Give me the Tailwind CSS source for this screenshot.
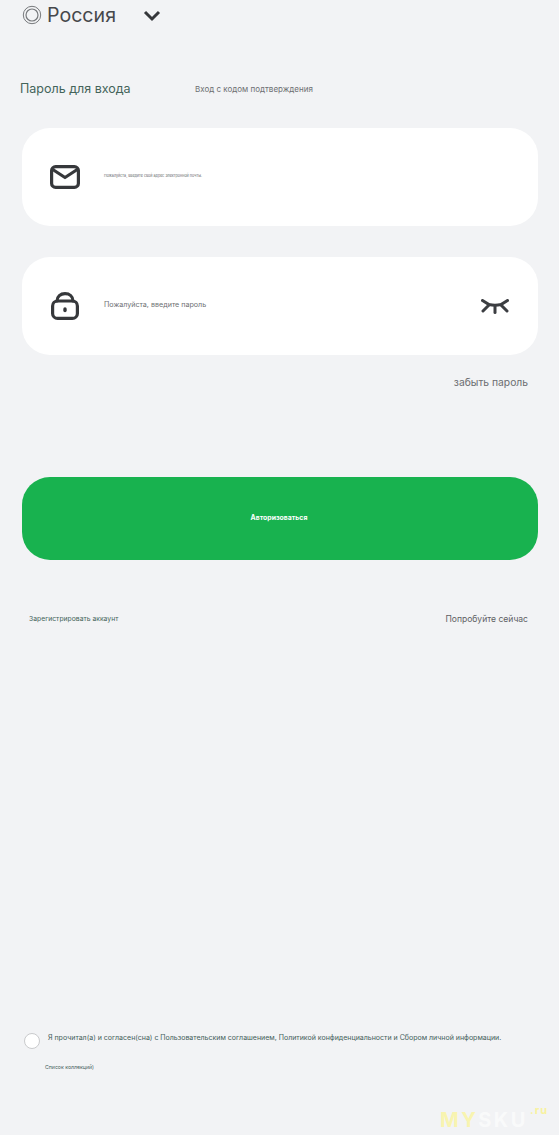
<!DOCTYPE html>
<html lang="ru">
<head>
    <meta charset="UTF-8">
    <title>Вход</title>
    <meta name="viewport" content="width=559, initial-scale=1">
    <script src="https://cdn.jsdelivr.net/npm/@tailwindcss/browser@4"></script>
</head>
<body class="bg-[#f2f3f5] font-['Inter','Roboto',sans-serif]">
    <div class="relative w-[559px] h-[1135px] overflow-hidden flex flex-col">
        <!-- region picker -->
        <div class="flex items-center h-[30px] pl-[22px]">
            <svg class="w-5 h-5" viewBox="0 0 20 20" fill="none" stroke="#77797c">
                <circle cx="10" cy="10" r="8.7" stroke-width="1"/>
                <circle cx="10" cy="10" r="6" stroke-width="1.2"/>
            </svg>
            <span class="ml-[5px] mt-[2px] text-[19.6px] leading-none text-[#46484b]">Россия</span>
            <svg class="ml-[27px] mt-[1px] w-[18px] h-[12px]" viewBox="0 0 18 12" fill="none" stroke="#35373a" stroke-width="3">
                <path d="M2 2l7 7 7-7"/>
            </svg>
        </div>

        <!-- tabs -->
        <div class="flex items-center h-[20px] mt-[49px] pl-[20px]">
            <span class="w-[175px] text-[12.5px] text-[#44645a]">Пароль для входа</span>
            <span class="text-[8px] text-[#6d6f72]">Вход с кодом подтверждения</span>
        </div>

        <!-- fields -->
        <div class="ml-[22px] mr-[21px] mt-[29px] h-[98px] rounded-[28px] bg-white flex items-center pl-[28px]">
            <svg class="w-[30px] h-[24px] shrink-0" viewBox="0 0 30 24" fill="none" stroke="#36383b" stroke-width="3.2" stroke-linejoin="round" stroke-linecap="round">
                <rect x="1.6" y="1.6" width="26.8" height="20.8" rx="4"/>
                <path d="M3.500 5l11.500 7.500L26.500 5"/>
            </svg>
            <span class="ml-[24px] -mt-[2px] text-[3.7px] text-[#66686b]">Пожалуйста, введите свой адрес электронной почты.</span>
        </div>
        <div class="ml-[22px] mr-[21px] mt-[31px] h-[98px] rounded-[28px] bg-white flex items-center pl-[29px] pr-[29px]">
            <svg class="w-[28px] h-[28px] shrink-0" viewBox="0 0 28 28" fill="none" stroke="#36383b" stroke-width="3.2" stroke-linecap="round">
                <rect x="1.600" y="9" width="24.800" height="17.400" rx="5"/>
                <path d="M6 9c0-4.500 3.500-7.400 8-7.400S22 4.500 22 9"/>
                <path d="M14 17v1.500" stroke-width="3.400"/>
            </svg>
            <span class="ml-[25px] -mt-[2px] text-[7.15px] text-[#6d6f72]">Пожалуйста, введите пароль</span>
            <svg class="ml-auto w-[28px] h-[15px]" viewBox="0 0 28 15" fill="none" stroke="#3c3e42" stroke-width="3" stroke-linecap="round">
                <path d="M1.500 1.500L8 5.500c4 1 8 1 12 0l6.500-4"/>
                <path d="M14 7v6.500"/>
                <path d="M8 6l-6 6"/>
                <path d="M20 6l6 6"/>
            </svg>
        </div>
        <div class="mt-[19px] pr-[31px] text-right text-[10.3px] leading-[17px] text-[#6b6d70]">забыть пароль</div>

        <!-- submit -->
        <button class="ml-[22px] mr-[21px] mt-[86px] h-[83px] rounded-[28px] bg-[#18b24f] text-white text-[6.9px] font-bold pr-[2px]">Авторизоваться</button>

        <div class="flex justify-between items-center mt-[50px] pl-[29px] pr-[31px] h-[18px]">
            <span class="text-[6.8px] text-[#44645a]">Зарегистрировать аккаунт</span>
            <span class="text-[8.55px] text-[#5e6063]">Попробуйте сейчас</span>
        </div>

        <!-- agreement -->
        <div class="flex items-center mt-auto ml-[24px] h-[16px]">
            <span class="w-4 h-4 rounded-full bg-white border border-[#c9cacc] shrink-0"></span>
            <span class="ml-[8px] -mt-[6px] text-[7.03px] text-[#44605a] whitespace-nowrap">Я прочитал(а) и согласен(сна) с Пользовательским соглашением, Политикой конфиденциальности и Сбором личной информации.</span>
        </div>
        <div class="ml-[45px] mt-[10px] mb-[60px] text-[5.2px] leading-[16px] text-[#44605a]">Список коллекций)</div>

        <!-- watermark -->
        <div class="absolute left-[440px] top-[1110px] text-[20px] leading-[20px] font-bold tracking-[2.5px] text-white/60 whitespace-nowrap"><span class="text-[#f8f4b0]">MY</span>SKU</div>
        <div class="absolute left-[530px] top-[1104px] text-[11px] leading-[12px] font-bold tracking-[1px] text-[#f8f2a0]">.ru</div>
    </div>
</body>
</html>
